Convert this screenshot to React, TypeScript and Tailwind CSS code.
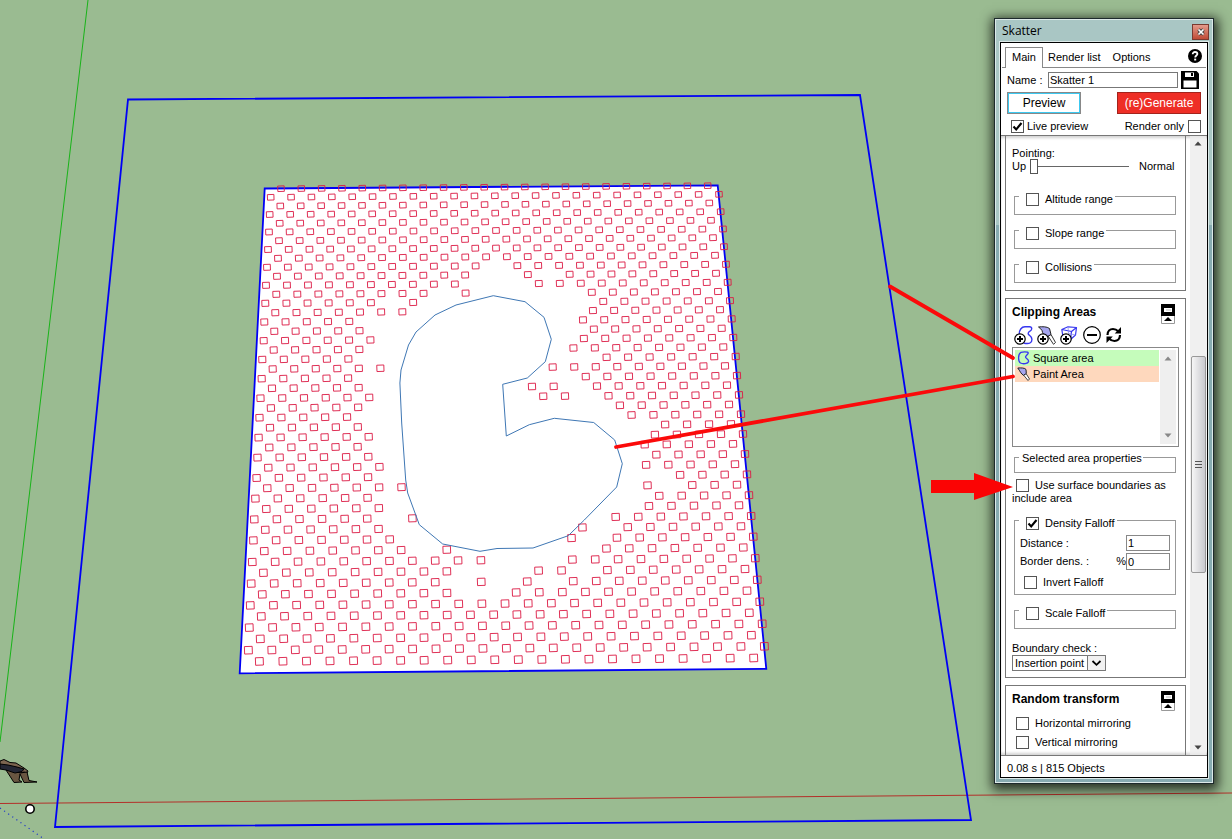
import React, { useId, useState } from "react";

/* ---------- viewport data ---------- */

// One entry per row of scattered objects: first object (x, y), last object (x, y).
const ROWS: [number, number, number, number][] = [
  [281, 188.7, 707.7, 185.7], [270.7, 197.3, 719, 194.3], [280.3, 206, 709.3, 203],
  [269.7, 214.5, 720.7, 211.7], [279.7, 223.3, 711, 220.3], [269, 232, 723, 229],
  [279, 240.7, 713, 237.7], [268, 249.5, 724, 246.7], [278, 258.3, 715, 255.3],
  [267, 267.3, 726, 264.3], [277, 276.3, 716, 273.3], [266, 285.3, 727.7, 282.3],
  [276.3, 294.3, 718, 291.5], [265.3, 303.3, 730, 300.7], [275.3, 312.7, 720, 309.7],
  [264.3, 322, 731.7, 318.9], [274.3, 331.3, 721.7, 328.3], [263.7, 340.7, 733.3, 337.5],
  [273.7, 350, 723.3, 347], [262.3, 359.5, 735.7, 356.5], [272.7, 369, 725, 365.9],
  [261.7, 378.7, 737, 375.6], [272, 388.3, 727, 385.2], [260.5, 398.2, 739, 394.9],
  [270.9, 408, 729, 404.5], [259.5, 417.7, 741, 414.2], [270, 427.7, 731, 424],
  [258.6, 437.6, 743, 434], [269.3, 447.5, 733, 443.9], [257.5, 457.6, 745, 454],
  [268.3, 467.7, 735, 464.2], [256.6, 478, 747, 474.4], [267.3, 488.2, 737, 484.7],
  [255.4, 498.6, 749, 495.2], [266.3, 509, 739, 505.3], [254.3, 519.4, 751.2, 516],
  [265.3, 529.8, 741, 526.3], [253.4, 540.4, 753.3, 536.7], [264.3, 551.1, 743.3, 547.5],
  [252.3, 562, 755.3, 558.2], [263.4, 572.8, 745, 569], [251.2, 583.6, 757.3, 579.8],
  [262.3, 594.4, 747, 590.7], [250.3, 605.4, 759.8, 601.7], [261.3, 616.4, 749.3, 612.8],
  [249.3, 627.6, 762.2, 623.8], [260.3, 638.9, 751.4, 635.2], [248.4, 650.2, 764.4, 646.3],
  [259.4, 661.4, 753.7, 658],
];

// Horizontal spans, by row index, that the clipping areas leave empty.
const GAPS: Record<number, [number, number][]> = {
  9: [[485, 508]],
  10: [[474, 518], [540, 560]],
  11: [[463, 530]],
  12: [[433, 456], [475, 582]],
  13: [[381, 403], [422, 595]],
  14: [[410, 585]],
  15: [[358, 575]],
  16: [[368, 585]],
  17: [[379, 575]],
  18: [[368, 565]],
  19: [[357, 598]],
  20: [[390, 545]],
  21: [[357, 578]],
  22: [[367, 525], [565, 588]],
  23: [[379, 535], [576, 600]],
  24: [[368, 610]],
  25: [[357, 622]],
  26: [[368, 656]],
  27: [[378, 645]],
  28: [[368, 636]],
  29: [[378, 648]],
  30: [[389, 636]],
  31: [[378, 670]],
  32: [[410, 638], [659, 682]],
  33: [[378, 650]],
  34: [[389, 640]],
  35: [[378, 401], [423, 605]],
  36: [[389, 573], [594, 616]],
  37: [[400, 563], [583, 607]],
  38: [[412, 436], [458, 597]],
  39: [[492, 563]],
  40: [[457, 529], [573, 597]],
  41: [[447, 470], [492, 518], [540, 562]],
  42: [[458, 506]],
};

type Pt = { x: number; y: number; s: number };

const OBJECTS: Pt[] = ROWS.flatMap(([x0, y0, x1, y1], r) => {
  const steps = r % 2 === 0 ? 21 : 22;
  const gaps = GAPS[r] ?? [];
  const out: Pt[] = [];
  for (let i = 0; i <= steps; i++) {
    const x = x0 + ((x1 - x0) * i) / steps;
    const y = y0 + ((y1 - y0) * i) / steps;
    if (!gaps.some(([a, b]) => x > a && x < b)) out.push({ x, y, s: r / 48 });
  }
  return out;
});

function Viewport() {
  return (
    <svg className="block h-screen w-full" role="img" aria-label="Viewport">
      <line x1="88" y1="0" x2="0" y2="742" stroke="#19b319" strokeWidth="1" />
      <line x1="0" y1="803.5" x2="1232" y2="793" stroke="#b3302a" strokeWidth="1" />
      <line x1="0" y1="808" x2="44" y2="839" stroke="#2238c8" strokeWidth="1.2" strokeDasharray="1.2 3.8" />
      <g stroke="#000" strokeWidth="1" strokeLinejoin="round">
        <path d="M0 761 L4 759.5 L10 762.5 L16 763 L24 768 L28 771 L27 773 L24 772 L20 773 L10 769 L0 766Z" fill="#7b6550" />
        <path d="M6 770 L12 770 L20 773 L27 772 L29 780.5 L37 782 L24 782.5 L20 774 L19 780 L22 782 L14 782.5Z" fill="#695641" />
        <path d="M0 764 L8 765 L17 767 L24 769 L22 771.5 L15 773 L6 770 L0 769Z" fill="#242735" />
      </g>
      <circle cx="30" cy="809" r="4.2" fill="#fff" stroke="#000" strokeWidth="1.6" />
      <polygon points="128,99.5 860,95 971,820 55,827" fill="none" stroke="#0000f5" strokeWidth="1.8" />
      <polygon points="264.7,188.5 717.7,185.3 766.3,668.8 239.7,673.3" fill="#fff" stroke="#0000f5" strokeWidth="1.8" />
      <g fill="none" stroke="#dc1c46" strokeWidth="0.9">
        {OBJECTS.map(({ x, y, s }, i) => {
          const w = 6.5 + s * 1.3;
          const h = 5.5 + s * 2;
          return <rect key={i} x={x - w / 2} y={y - h / 2} width={w} height={h} transform={`rotate(-2 ${x} ${y})`} />;
        })}
      </g>
      <polygon
        points="493.3,295.7 525,301.7 544,317.3 551.3,339.3 545.3,361.7 527.3,378 502.7,384.3 506.3,436 529.3,424.7 554.3,418.3 593.7,422.5 614.7,440 622.3,463.7 616.7,487 584.3,520 568.3,535.7 533,548 497,548.5 480,551.3 442.7,544 419.3,524.7 407.7,493 405.7,480 401.7,423 399.9,383 401,370 408.5,345 416,332 435,315 456,305"
        fill="none"
        stroke="#3f77b4"
        strokeWidth="1"
      />
    </svg>
  );
}

function Callouts() {
  return (
    <svg className="pointer-events-none absolute inset-0 h-full w-full" aria-hidden="true">
      <g stroke="#fb0a0a" strokeWidth="3.8" strokeLinecap="round">
        <line x1="890" y1="286.5" x2="1013" y2="358" />
        <line x1="616" y1="447" x2="1013" y2="376.500" />
      </g>
      <polygon points="931,480 974,480 974,473 1013,487 974,500 974,493 931,493" fill="#fb0404" />
    </svg>
  );
}

/* ---------- icons ---------- */

const PlusBadge = () => (
  <g>
    <circle cx="6" cy="13" r="5.2" fill="#fff" stroke="#000" strokeWidth="1.2" />
    <path d="M3 13H9M6 10V16" stroke="#000" strokeWidth="2" />
  </g>
);

const iconClass = "block h-[19px] w-[19px]";

const AddCurve = () => (
  <svg className={iconClass} viewBox="0 0 19 19" fill="none">
    <path d="M5.200 8.500C5 4 7.500 .8 11 .8H15.500C18.500 1 18.300 4 16 5.200C13.800 6.500 13.500 8 15.500 9.300C18.500 11.500 18.800 15.500 16 17C14.500 17.800 12 17.600 9.500 17" stroke="#3636f0" strokeWidth="1.4" />
    <PlusBadge />
  </svg>
);
const AddPaint = () => (
  <svg className={iconClass} viewBox="0 0 19 19" fill="none">
    <path d="M11 10L14 8.500L18.500 16.500L16.500 18.300Z" fill="#fff" stroke="#333" strokeWidth="1" />
    <path d="M1.500 1C5 .5 10 .5 12.500 2.500L14 8.500L10.500 10.500C7 9.500 5.500 7.500 5 4.500C4 3 3 2 1.500 1Z" fill="#a5a5ee" stroke="#222" strokeWidth="1" />
    <PlusBadge />
  </svg>
);
const AddVolume = () => (
  <svg className={iconClass} viewBox="0 0 19 19" fill="none">
    <path d="M1.800 3.500L8 .8L16.500 1.500L11.500 5.500ZM16.500 1.500L15.500 9L10.500 13.500L11.500 5.500M1.800 3.500L3 11" stroke="#3636f0" strokeWidth="1.2" strokeLinejoin="round" />
    <path d="M8 .8L8.500 7.500L15.500 9" stroke="#8c8cf4" strokeWidth=".8" />
    <PlusBadge />
  </svg>
);
const RemoveIcon = () => (
  <svg className={iconClass} viewBox="0 0 19 19" fill="none">
    <circle cx="9" cy="9" r="8.300" stroke="#000" strokeWidth="1.2" />
    <path d="M4 9H14" stroke="#000" strokeWidth="2" />
  </svg>
);
const RefreshIcon = () => (
  <svg className={iconClass} viewBox="0 0 19 19" fill="none">
    <path d="M1.500 9C1.500 5 4 3 7 3C9.500 3 11 4 12.500 5.500M14 9C14 13 11.500 15 8.500 15C6 15 4.500 14 3 12.500" stroke="#000" strokeWidth="2.200" />
    <path d="M15 1V7.500H8.700ZM.500 17V10.500H6.800Z" fill="#000" />
  </svg>
);
const CurveIcon = () => (
  <svg className="block h-[14px] w-[14px]" viewBox="0 0 14 14" fill="none">
    <path d="M4 1.300C6 .8 9 .8 10.500 1.200C12.800 2.300 8.500 4.500 8.500 6C8.500 7.500 12 8.500 11.600 10.500C11 12.800 6 13.300 3.500 12C1.200 10.500 .5 3.500 4 1.300Z" stroke="#3636f0" strokeWidth="1.3" />
  </svg>
);
const BrushIcon = () => (
  <svg className="block h-[14px] w-[14px]" viewBox="0 0 14 14" fill="none">
    <path d="M6.500 8L9 6.500L12.500 12L11 13.500Z" fill="#fff" stroke="#333" strokeWidth=".9" />
    <path d="M.8 1C4 .8 8 .8 9 2.500L9.300 6.500L6.500 8.300C4 7 3 4 .8 1Z" fill="#a5a5ee" stroke="#222" strokeWidth="1" />
  </svg>
);
const SaveIcon = () => (
  <svg className="block h-[18px] w-[18px]" viewBox="0 0 18 18">
    <path d="M0 0H15.500L18 2.500V18H0Z" fill="#000" />
    <path d="M4 1.500H13V6H4Z" fill="#fff" />
    <path d="M10 2H12V5H10Z" fill="#000" />
    <path d="M2.500 9.500H15.500V16.500H2.500Z" fill="#fff" />
  </svg>
);
const HelpIcon = () => (
  <svg className="block h-[14px] w-[14px]" viewBox="0 0 14 14" fill="none">
    <circle cx="7" cy="7" r="7" fill="#000" />
    <path d="M4.700 5.300C4.700 3.700 5.700 3 7 3C8.400 3 9.400 3.800 9.400 5C9.400 6.500 7.200 6.600 7.200 8.500" stroke="#fff" strokeWidth="1.800" />
    <path d="M6.200 9.600H8.200V11.500H6.200Z" fill="#fff" />
  </svg>
);

/* ---------- controls ---------- */

function CheckBox({ id, defaultChecked }: { id: string; defaultChecked?: boolean }) {
  return (
    <span className="grid h-[13px] w-[13px] shrink-0">
      <input
        id={id}
        type="checkbox"
        defaultChecked={defaultChecked}
        className="peer col-start-1 row-start-1 h-[13px] w-[13px] appearance-none border border-[#555] bg-white"
      />
      <svg viewBox="0 0 13 13" className="pointer-events-none col-start-1 row-start-1 hidden h-[13px] w-[13px] peer-checked:block" fill="none">
        <path d="M2.500 6.500L5.200 9.500L10.500 3" stroke="#000" strokeWidth="2.100" />
      </svg>
    </span>
  );
}

function CheckField({ label, className = "", defaultChecked }: { label: string; className?: string; defaultChecked?: boolean }) {
  const id = useId();
  return (
    <div className={`flex items-center gap-[6px] ${className}`}>
      <CheckBox id={id} defaultChecked={defaultChecked} />
      <label htmlFor={id}>{label}</label>
    </div>
  );
}

function Group({ label, className = "", defaultChecked, children }: { label: string; className?: string; defaultChecked?: boolean; children?: React.ReactNode }) {
  const id = useId();
  return (
    <fieldset className={`mr-[3px] ml-[2px] border border-[#999] ${className}`}>
      <legend className="ml-1 flex items-center gap-[6px] pt-[6px] pr-[2px] pl-[7px]">
        <CheckBox id={id} defaultChecked={defaultChecked} />
        <label htmlFor={id}>{label}</label>
      </legend>
      {children}
    </fieldset>
  );
}

function SectionTitle({ children }: { children: string }) {
  return (
    <div className="flex items-start justify-between pr-1">
      <h2 className="text-[12px] leading-4 font-bold">{children}</h2>
      <button type="button" aria-label={`Collapse ${children}`} className="block">
        <svg className="block h-[20px] w-[14px]" viewBox="0 0 14 20">
          <path d="M.5 11.500V19.500H13.500V11.500" fill="#fff" stroke="#999" />
          <path d="M0 0H14V12H0Z" fill="#000" />
          <path d="M3 4H11V8H3Z" fill="#fff" />
          <path d="M5 5.500H10V6.500H5Z" fill="#bbb" />
          <path d="M7 13L11 17H3Z" fill="#000" />
        </svg>
      </button>
    </div>
  );
}

const Arrow = ({ up, className = "" }: { up?: boolean; className?: string }) => (
  <svg className={`block h-[5px] w-[8px] ${className}`} viewBox="0 0 8 5" aria-hidden="true">
    <path d={up ? "M4 .5L7.500 4.500H.5Z" : "M4 4.500L7.500 .5H.5Z"} fill="currentColor" />
  </svg>
);

function Dialog() {
  const [name, setName] = useState("Skatter 1");
  return (
    <section
      aria-label="Skatter"
      className="absolute top-[18px] left-[994px] flex h-[766px] w-[220px] flex-col border border-[#1d2a2c] bg-linear-to-b from-[#a9c6c4] from-27% to-[#87abb1] to-27% font-['Liberation_Sans',Arial,sans-serif] text-[11px] leading-[13px] text-black shadow-[1px_3px_11px_3px_rgba(0,0,0,0.75)]"
    >
      <div className="flex min-h-0 flex-1 flex-col border border-[#dce9e8] px-[3px] pb-[3px]">
        <header className="flex h-[21px] shrink-0 items-center justify-between pl-[3px]">
          <h1 className="font-['Open_Sans','Noto_Sans',sans-serif] text-[12px] leading-4">Skatter</h1>
          <button type="button" aria-label="Close" className="mt-[2px] grid h-[16px] w-[17px] place-items-center border border-[#7a3a30] bg-linear-to-b from-[#e39a8b] to-[#bf4a35]">
            <svg className="block h-2 w-2" viewBox="0 0 8 8">
              <path d="M1.500 1.500L6.500 6.500M6.500 1.500L1.500 6.500" stroke="#444" strokeWidth="3.400" />
              <path d="M1.500 1.500L6.500 6.500M6.500 1.500L1.500 6.500" stroke="#fff" strokeWidth="1.700" />
            </svg>
          </button>
        </header>

        <div className="flex min-h-0 flex-1 flex-col border border-[#dce9e8]">
          <div className="flex min-h-0 flex-1 flex-col border border-black bg-white">
            <div className="shrink-0 border-b border-[#777] pb-[2px]">
              <nav className="mx-px flex h-[25px] items-end border-b border-[#888] pl-[3px]" aria-label="Sections">
                <a href="#main" className="-mb-px h-[21px] w-[38px] border border-b-0 border-[#888] bg-white pt-[3px] text-center">Main</a>
                <a href="#render-list" className="h-[20px] pt-[4px] pl-[5px]">Render list</a>
                <a href="#options" className="h-[20px] pt-[4px] pl-[12px]">Options</a>
                <button type="button" aria-label="Help" className="mr-[4px] mb-[4px] ml-auto block">
                  <HelpIcon />
                </button>
              </nav>
              <div className="mt-[2px] flex h-[20px] items-center pr-[8px] pl-[6px]">
                <label htmlFor="object-name" className="w-[41px]">Name :</label>
                <input id="object-name" value={name} onChange={(e) => setName(e.target.value)} className="h-[16px] w-[130px] border border-[#777] bg-white px-px" />
                <button type="button" aria-label="Save" className="ml-auto block">
                  <SaveIcon />
                </button>
              </div>
              <div className="mt-[2px] flex justify-between pr-[6px] pl-[6px] text-[12px]">
                <button type="button" className="h-[22px] w-[74px] border border-[#888] bg-white shadow-[inset_0_0_0_1px_#3cc8f0]">Preview</button>
                <button type="button" className="h-[22px] w-[84px] border border-[#a3231c] bg-[#ee2e26] text-white">(re)Generate</button>
              </div>
              <div className="mt-[6px] flex h-[13px] items-center justify-between pr-[6px] pl-[10px]">
                <div className="flex items-center gap-[3px]">
                  <CheckBox id="live-preview" defaultChecked />
                  <label htmlFor="live-preview">Live preview</label>
                </div>
                <div className="flex items-center gap-[4px]">
                  <label htmlFor="render-only">Render only</label>
                  <CheckBox id="render-only" />
                </div>
              </div>
            </div>

            <div className="flex min-h-0 flex-1 shadow-[inset_0_3px_3px_-1px_rgba(0,0,0,0.18),inset_0_-3px_3px_-1px_rgba(0,0,0,0.18)]">
              <div className="mr-1 ml-1 flex min-w-0 flex-1 flex-col gap-[7px] overflow-hidden">
                <div className="shrink-0 border border-t-0 border-[#777] px-[6px] pt-[11px] pb-[7px]">
                  <label htmlFor="pointing" className="block">Pointing:</label>
                  <div className="flex h-[13px] items-center">
                    <span className="w-[18px]">Up</span>
                    <input
                      id="pointing"
                      type="range"
                      min={0}
                      max={100}
                      defaultValue={0}
                      className="h-[16px] w-[99px] appearance-none bg-transparent [&::-webkit-slider-runnable-track]:h-px [&::-webkit-slider-runnable-track]:bg-[#666] [&::-webkit-slider-thumb]:mt-[-7px] [&::-webkit-slider-thumb]:h-[15px] [&::-webkit-slider-thumb]:w-[8px] [&::-webkit-slider-thumb]:appearance-none [&::-webkit-slider-thumb]:border [&::-webkit-slider-thumb]:border-[#555] [&::-webkit-slider-thumb]:bg-white"
                    />
                    <span className="ml-[10px]">Normal</span>
                  </div>
                  <Group label="Altitude range" className="mt-[14px] h-[28px]" />
                  <Group label="Slope range" className="mt-[6px] h-[28px]" />
                  <Group label="Collisions" className="mt-[6px] h-[28px]" />
                </div>

                <div className="shrink-0 border border-[#777] px-[6px] pt-[5px] pb-[6px]">
                  <SectionTitle>Clipping Areas</SectionTitle>
                  <div className="mt-[2px] flex gap-1 pl-[2px]">
                    <button type="button" aria-label="Add curve area"><AddCurve /></button>
                    <button type="button" aria-label="Add paint area"><AddPaint /></button>
                    <button type="button" aria-label="Add volume area"><AddVolume /></button>
                    <button type="button" aria-label="Remove area"><RemoveIcon /></button>
                    <button type="button" aria-label="Refresh areas"><RefreshIcon /></button>
                  </div>
                  <div className="mt-[2px] flex h-[100px] border border-[#888] p-[2px]">
                    <ul className="flex-1">
                      <li className="flex h-[16px] items-center gap-[2px] bg-[#c5fcbb] pl-[2px]"><CurveIcon />Square area</li>
                      <li className="flex h-[16px] items-center gap-[2px] bg-[#fed8bd] pl-[2px]"><BrushIcon />Paint Area</li>
                    </ul>
                    <div className="ml-px flex w-[16px] flex-col items-center justify-between bg-[#efefef] py-[6px] text-[#888]">
                      <Arrow up />
                      <Arrow />
                    </div>
                  </div>
                  <fieldset className="mt-[3px] mr-[3px] ml-[2px] h-[23px] border border-[#999]">
                    <legend className="ml-1 pt-[2px] pr-px pl-[3px]">Selected area properties</legend>
                  </fieldset>
                  <div className="mt-[6px] h-[27px] pl-[4px]">
                    <div className="float-left mr-[6px]"><CheckBox id="surface-bounds" /></div>
                    <label htmlFor="surface-bounds" className="-ml-1 block">Use surface boundaries as include area</label>
                  </div>
                  <Group label="Density Falloff" defaultChecked className="mt-[5px] h-[84px]">
                    <div className="mt-[5px] flex h-[16px] items-center justify-between pr-[5px] pl-[5px]">
                      <label htmlFor="distance">Distance :</label>
                      <input id="distance" defaultValue="1" className="h-[16px] w-[44px] border border-[#888] bg-white px-px" />
                    </div>
                    <div className="mt-[2px] flex h-[17px] items-center pr-[5px] pl-[5px]">
                      <label htmlFor="border-density">Border dens. :</label>
                      <span className="ml-auto">%</span>
                      <input id="border-density" defaultValue="0" className="h-[17px] w-[44px] border border-[#888] bg-white px-px" />
                    </div>
                    <CheckField label="Invert Falloff" className="mt-[6px] pl-[9px]" />
                  </Group>
                  <Group label="Scale Falloff" className="mt-[6px] h-[28px]" />
                  <label htmlFor="boundary-check" className="mt-[13px] block">Boundary check :</label>
                  <div className="grid h-[16px] w-[94px]">
                    <select id="boundary-check" className="col-start-1 row-start-1 h-[16px] w-[94px] appearance-none border border-[#777] bg-white pl-[2px]">
                      <option>Insertion point</option>
                      <option>Bounding box</option>
                    </select>
                    <svg className="pointer-events-none col-start-1 row-start-1 block h-[16px] w-[19px] justify-self-end" viewBox="0 0 19 16" fill="none" aria-hidden="true">
                      <path d="M.5 .5H18.500V15.500H.5Z" fill="#f1f1f1" stroke="#777" />
                      <path d="M5.500 6L9.500 9.800L13.500 6" stroke="#000" strokeWidth="1.800" />
                    </svg>
                  </div>
                </div>

                <div className="h-[120px] shrink-0 border border-[#777] px-[6px] pt-[5px]">
                  <SectionTitle>Random transform</SectionTitle>
                  <CheckField label="Horizontal mirroring" className="mt-[6px] pl-[4px]" />
                  <CheckField label="Vertical mirroring" className="mt-[6px] pl-[4px]" />
                </div>
              </div>

              <div className="mr-px flex w-[16px] shrink-0 flex-col items-center bg-[#ececec]/80 text-[#444]">
                <Arrow up className="mt-[5px]" />
                <div className="mt-[210px] flex h-[217px] w-[15px] flex-col items-center justify-center gap-[2px] rounded-xs border border-[#999] bg-linear-to-r from-[#f6f6f6] to-[#c9c9ce]">
                  <span className="h-px w-[7px] bg-[#555]" />
                  <span className="h-px w-[7px] bg-[#555]" />
                  <span className="h-px w-[7px] bg-[#555]" />
                </div>
                <Arrow className="mt-auto mb-[5px]" />
              </div>
            </div>

            <footer className="h-[22px] shrink-0 border-t border-[#777] pt-[6px] pl-[6px]">0.08 s | 815 Objects</footer>
          </div>
        </div>
      </div>
    </section>
  );
}

export default function App() {
  return (
    <main className="relative min-h-screen overflow-hidden bg-[#9abb91]">
      <Viewport />
      <Dialog />
      <Callouts />
    </main>
  );
}
